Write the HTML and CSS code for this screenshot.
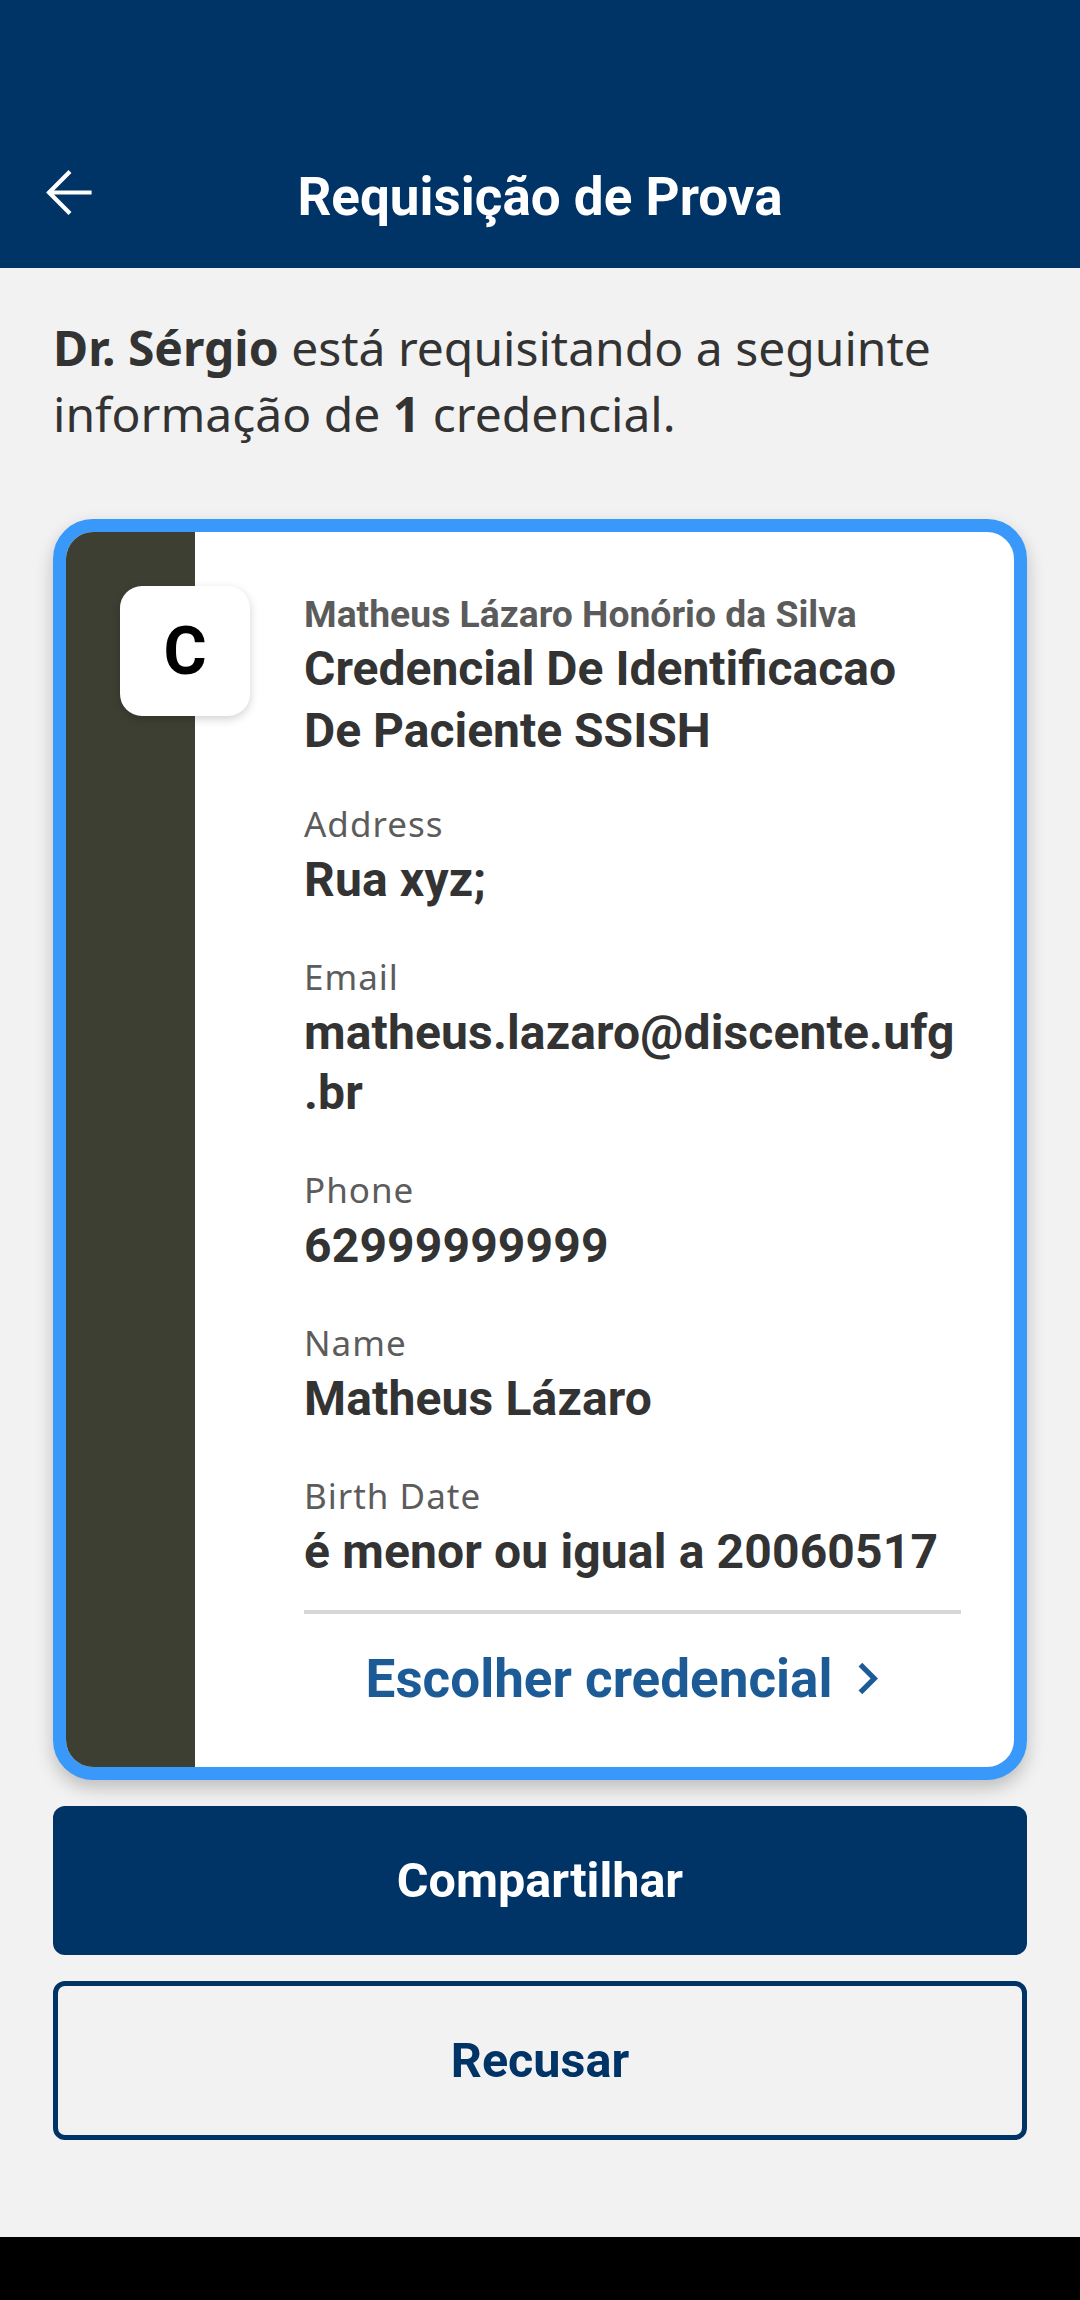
FILE: index.html
```html
<!DOCTYPE html>
<html lang="pt-BR">
<head>
<meta charset="utf-8">
<title>Requisição de Prova</title>
<link rel="stylesheet" href="styles.css">
</head>
<body>
<div class="screen">
  <header class="appbar">
    <div class="statusbar"></div>
    <div class="toolbar">
      <button class="back" aria-label="Voltar">
        <svg viewBox="0 0 24 24" width="63" height="63"><path d="M20 12H5.2M12 4.6L4.6 12l7.4 7.4" fill="none" stroke="#fff" stroke-width="1.6" stroke-linecap="square"/></svg>
      </button>
      <h1 class="title">Requisição de Prova</h1>
    </div>
  </header>

  <main class="content">
    <p class="intro"><b>Dr. Sérgio</b> está requisitando a seguinte informação de <b>1</b> credencial.</p>

    <section class="card">
      <div class="stripe"></div>
      <div class="logo">C</div>
      <div class="card-body">
        <div class="issuer">Matheus Lázaro Honório da Silva</div>
        <div class="cred-title">Credencial De Identificacao De Paciente SSISH</div>

        <div class="fields">
          <div class="field">
            <div class="label">Address</div>
            <div class="value">Rua xyz;</div>
          </div>
          <div class="field">
            <div class="label">Email</div>
            <div class="value">matheus.lazaro@discente.ufg<wbr>.br</div>
          </div>
          <div class="field">
            <div class="label">Phone</div>
            <div class="value">62999999999</div>
          </div>
          <div class="field">
            <div class="label">Name</div>
            <div class="value">Matheus Lázaro</div>
          </div>
          <div class="field">
            <div class="label">Birth Date</div>
            <div class="value">é menor ou igual a 20060517</div>
          </div>
        </div>

        <div class="divider"></div>

        <div class="choose">
          <span>Escolher credencial</span>
          <svg viewBox="0 0 24 24" width="63" height="63"><path d="M10 6L8.59 7.41 13.17 12l-4.58 4.59L10 18l6-6z" fill="#1d5b97"/></svg>
        </div>
      </div>
    </section>

    <div class="actions">
      <button class="btn btn-primary">Compartilhar</button>
      <button class="btn btn-outline">Recusar</button>
    </div>
  </main>

  <div class="navbar"></div>
</div>
</body>
</html>
```

FILE: styles.css
```css
* { box-sizing: border-box; }

html, body {
  margin: 0;
  padding: 0;
}

body {
  width: 1080px;
  height: 2300px;
  background: #f2f2f2;
  font-family: "Noto Sans", "Open Sans", sans-serif;
  overflow: hidden;
}

.screen {
  width: 1080px;
  height: 2300px;
  display: flex;
  flex-direction: column;
}

/* App bar */
.appbar {
  background: #003366;
  flex: 0 0 auto;
}

.statusbar {
  height: 121px;
}

.toolbar {
  height: 147px;
  display: flex;
  align-items: center;
  position: relative;
  padding-left: 37px;
}

.back {
  width: 63px;
  height: 63px;
  padding: 0;
  border: 0;
  background: none;
  display: flex;
  margin-top: -4px;
}

.title {
  position: absolute;
  left: 0;
  right: 0;
  margin: 0;
  text-align: center;
  color: #fff;
  font-family: Roboto, "Liberation Sans", sans-serif;
  font-weight: 700;
  font-size: 53px;
  line-height: 60px;
  pointer-events: none;
  margin-top: 4px;
}

/* Content */
.content {
  flex: 1 1 auto;
  padding: 47px 53px 0;
}

.intro {
  margin: 0;
  color: #333;
  font-size: 48px;
  line-height: 66px;
}

.intro b {
  font-weight: 700;
}

.card {
  margin-top: 72px;
  border: 13px solid #3899fb;
  border-radius: 40px;
  background: #fff;
  display: flex;
  position: relative;
  overflow: hidden;
  box-shadow: 0 8px 18px rgba(0, 0, 0, 0.22);
}

.stripe {
  flex: 0 0 129px;
  background: #3c3f31;
}

.logo {
  position: absolute;
  left: 54px;
  top: 54px;
  width: 130px;
  height: 130px;
  border-radius: 22px;
  background: #fff;
  box-shadow: 0 3px 10px rgba(0, 0, 0, 0.18);
  display: flex;
  align-items: center;
  justify-content: center;
  font-family: Roboto, "Liberation Sans", sans-serif;
  font-weight: 700;
  font-size: 66px;
  color: #000;
}

.card-body {
  flex: 1 1 auto;
  padding: 60px 53px 57px 109px;
  min-width: 0;
}

.issuer {
  font-family: Roboto, "Liberation Sans", sans-serif;
  font-weight: 700;
  font-size: 37.3px;
  line-height: 44px;
  color: #5b5b5b;
}

.cred-title {
  margin-top: 2px;
  font-family: Roboto, "Liberation Sans", sans-serif;
  font-weight: 700;
  font-size: 48px;
  line-height: 62px;
  color: #333;
}

.fields {
  display: flex;
  flex-direction: column;
  gap: 44px;
  margin-top: 39px;
}

.label {
  font-size: 35px;
  letter-spacing: 1px;
  line-height: 46px;
  color: #5c5c5c;
  margin-bottom: 3px;
}

.value {
  font-family: Roboto, "Liberation Sans", sans-serif;
  font-weight: 700;
  font-size: 48px;
  letter-spacing: 0.15px;
  line-height: 60px;
  color: #333;
}

.divider {
  margin-top: 28px;
  height: 4px;
  background: #d6d6d6;
}

.choose {
  margin-top: 33px;
  display: flex;
  align-items: center;
  justify-content: center;
  gap: 4px;
  color: #1d5b97;
  font-family: Roboto, "Liberation Sans", sans-serif;
  font-weight: 700;
  font-size: 53px;
  line-height: 60px;
}

/* Actions */
.actions {
  margin-top: 26px;
  display: flex;
  flex-direction: column;
  gap: 26px;
}

.btn {
  width: 100%;
  border-radius: 12px;
  font-family: Roboto, "Liberation Sans", sans-serif;
  font-weight: 700;
  font-size: 48.5px;
  display: flex;
  align-items: center;
  justify-content: center;
  padding: 0;
}

.btn-primary {
  height: 149px;
  background: #003366;
  color: #fff;
  border: 0;
}

.btn-outline {
  height: 159px;
  background: transparent;
  color: #003366;
  border: 5px solid #003366;
}

.navbar {
  flex: 0 0 63px;
  background: #000;
}
```
